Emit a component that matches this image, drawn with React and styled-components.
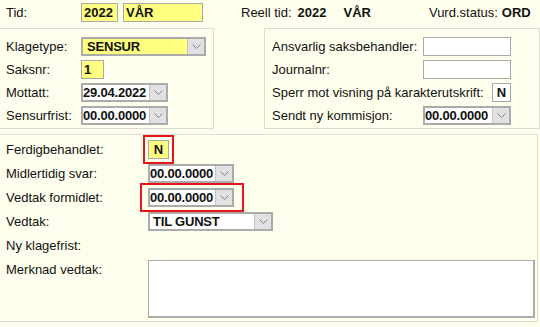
import React from "react"
import styled, { createGlobalStyle } from "styled-components"

const GlobalStyle = createGlobalStyle`
  body {
    margin: 0;
    background: #ffffee;
    font-family: "Liberation Sans", Arial, sans-serif;
    font-size: 13px;
    color: #111;
    overflow: hidden;
  }
`

const Page = styled.div`
  width: 540px;
  padding-top: 3px;
`

const TopRow = styled.div`
  display: flex;
  align-items: center;
  height: 19px;
  padding-left: 6px;
`

const Label = styled.span`
  display: flex;
  align-items: center;
  height: 19px;
  white-space: nowrap;
  width: ${(p) => (p.$width ? `${p.$width}px` : "auto")};
  margin-left: ${(p) => p.$ml || 0}px;
`

const Value = styled.span`
  font-weight: bold;
  margin-left: ${(p) => p.$ml || 0}px;
`

const Field = styled.span`
  box-sizing: border-box;
  display: inline-flex;
  align-items: center;
  justify-content: ${(p) => (p.$center ? "center" : "flex-start")};
  width: ${(p) => p.$width}px;
  height: 19px;
  padding: 0 2px;
  border: 1px solid #a9a9a9;
  background: ${(p) => (p.$yellow ? "#ffff80" : "#fff")};
  font-weight: bold;
  margin-left: ${(p) => p.$ml || 0}px;
`

const SelectBox = styled.span`
  box-sizing: border-box;
  display: inline-flex;
  width: ${(p) => p.$width}px;
  height: 19px;
  border: 2px solid #ababab;
  background: ${(p) => (p.$yellow ? "#ffff80" : "#fff")};
`

const SelectText = styled.span`
  flex: 1;
  display: flex;
  align-items: center;
  padding-left: ${(p) => p.$pad ?? 0}px;
  font-weight: bold;
  letter-spacing: -0.2px;
  white-space: nowrap;
  overflow: hidden;
`

const ArrowButton = styled.span`
  width: 16px;
  flex-shrink: 0;
  display: flex;
  align-items: center;
  justify-content: center;
  background: #e1e1e1;
  border-left: 1px solid #c4c4c4;
`

const Panels = styled.div`
  display: flex;
  margin-top: 6px;
  gap: 50px;
`

const Panel = styled.div`
  box-sizing: border-box;
  flex-shrink: 0;
  width: 215px;
  margin-left: -1px;
  display: grid;
  grid-template-columns: 75px 1fr;
  grid-auto-rows: 19px;
  row-gap: 4px;
  align-items: center;
  padding: 8px 0 3px 6px;
  border: 1px solid #dcdcd0;
`

const StackPanel = styled.div`
  box-sizing: border-box;
  flex-shrink: 0;
  width: 276px;
  display: flex;
  flex-direction: column;
  gap: 4px;
  padding: 8px 28px 3px 7px;
  border: 1px solid #dcdcd0;
`

const Row = styled.div`
  display: flex;
  align-items: center;
  justify-content: space-between;
  height: 19px;
`

const Section = styled.div`
  box-sizing: border-box;
  width: 539px;
  margin: 5px 0 0 -1px;
  display: grid;
  grid-template-columns: 142px 1fr;
  grid-template-rows: repeat(5, 19px) 58px;
  row-gap: 5px;
  padding: 5px 2px 3px 6px;
  border: 1px solid #dcdcd0;
`

const TopLabel = styled(Label)`
  align-self: start;
`

const Highlight = styled.span`
  position: relative;
  display: inline-flex;
  width: fit-content;
  &::after {
    content: "";
    position: absolute;
    top: ${(p) => -p.$t}px;
    bottom: ${(p) => -p.$b}px;
    left: ${(p) => -p.$l}px;
    right: ${(p) => -p.$r}px;
    border: 2px solid #e8141c;
    pointer-events: none;
  }
`

const TextArea = styled.div`
  box-sizing: border-box;
  height: 58px;
  background: #fff;
  border: 1px solid #ababab;
  border-width: 1px 2px 2px 1px;
`

const Chevron = () => (
  <svg width="9" height="5" viewBox="0 0 9 5">
    <polyline points="0.5,0.5 4.5,4.5 8.5,0.5" fill="none" stroke="#808080" strokeWidth="1" />
  </svg>
)

const Select = ({ width, yellow, children, pad }) => (
  <SelectBox $width={width} $yellow={yellow}>
    <SelectText $pad={pad}>{children}</SelectText>
    <ArrowButton>
      <Chevron />
    </ArrowButton>
  </SelectBox>
)

export default function App() {
  return (
    <Page>
      <GlobalStyle />
      <TopRow>
        <Label $width={75}>Tid:</Label>
        <Field $yellow $width={37}>2022</Field>
        <Field $yellow $width={80} $ml={5}>
          VÅR
        </Field>
        <Label $ml={38}>Reell tid:</Label>
        <Value $ml={6}>2022</Value>
        <Value $ml={17}>VÅR</Value>
        <Label $ml={58}>Vurd.status:</Label>
        <Value $ml={4}>ORD</Value>
      </TopRow>

      <Panels>
        <Panel>
          <Label>Klagetype:</Label>
          <Select width={125} yellow pad={4}>
            SENSUR
          </Select>
          <Label>Saksnr:</Label>
          <Field $yellow $width={23}>1</Field>
          <Label>Mottatt:</Label>
          <Select width={87}>29.04.2022</Select>
          <Label>Sensurfrist:</Label>
          <Select width={87}>00.00.0000</Select>
        </Panel>

        <StackPanel>
          <Row>
            <Label>Ansvarlig saksbehandler:</Label>
            <Field $width={88} />
          </Row>
          <Row>
            <Label>Journalnr:</Label>
            <Field $width={88} />
          </Row>
          <Row>
            <Label>Sperr mot visning på karakterutskrift:</Label>
            <Field $width={19} $center>
              N
            </Field>
          </Row>
          <Row>
            <Label>Sendt ny kommisjon:</Label>
            <Select width={88}>00.00.0000</Select>
          </Row>
        </StackPanel>
      </Panels>

      <Section>
        <Label>Ferdigbehandlet:</Label>
        <Highlight $t={5} $b={5} $l={5} $r={5}>
          <Field $yellow $width={21} $center>
            N
          </Field>
        </Highlight>
        <Label>Midlertidig svar:</Label>
        <Select width={86}>00.00.0000</Select>
        <Label>Vedtak formidlet:</Label>
        <Highlight $t={5} $b={5} $l={8} $r={10}>
          <Select width={86}>00.00.0000</Select>
        </Highlight>
        <Label>Vedtak:</Label>
        <Select width={125} pad={3}>
          TIL GUNST
        </Select>
        <Label>Ny klagefrist:</Label>
        <span />
        <TopLabel>Merknad vedtak:</TopLabel>
        <TextArea />
      </Section>
    </Page>
  )
}
